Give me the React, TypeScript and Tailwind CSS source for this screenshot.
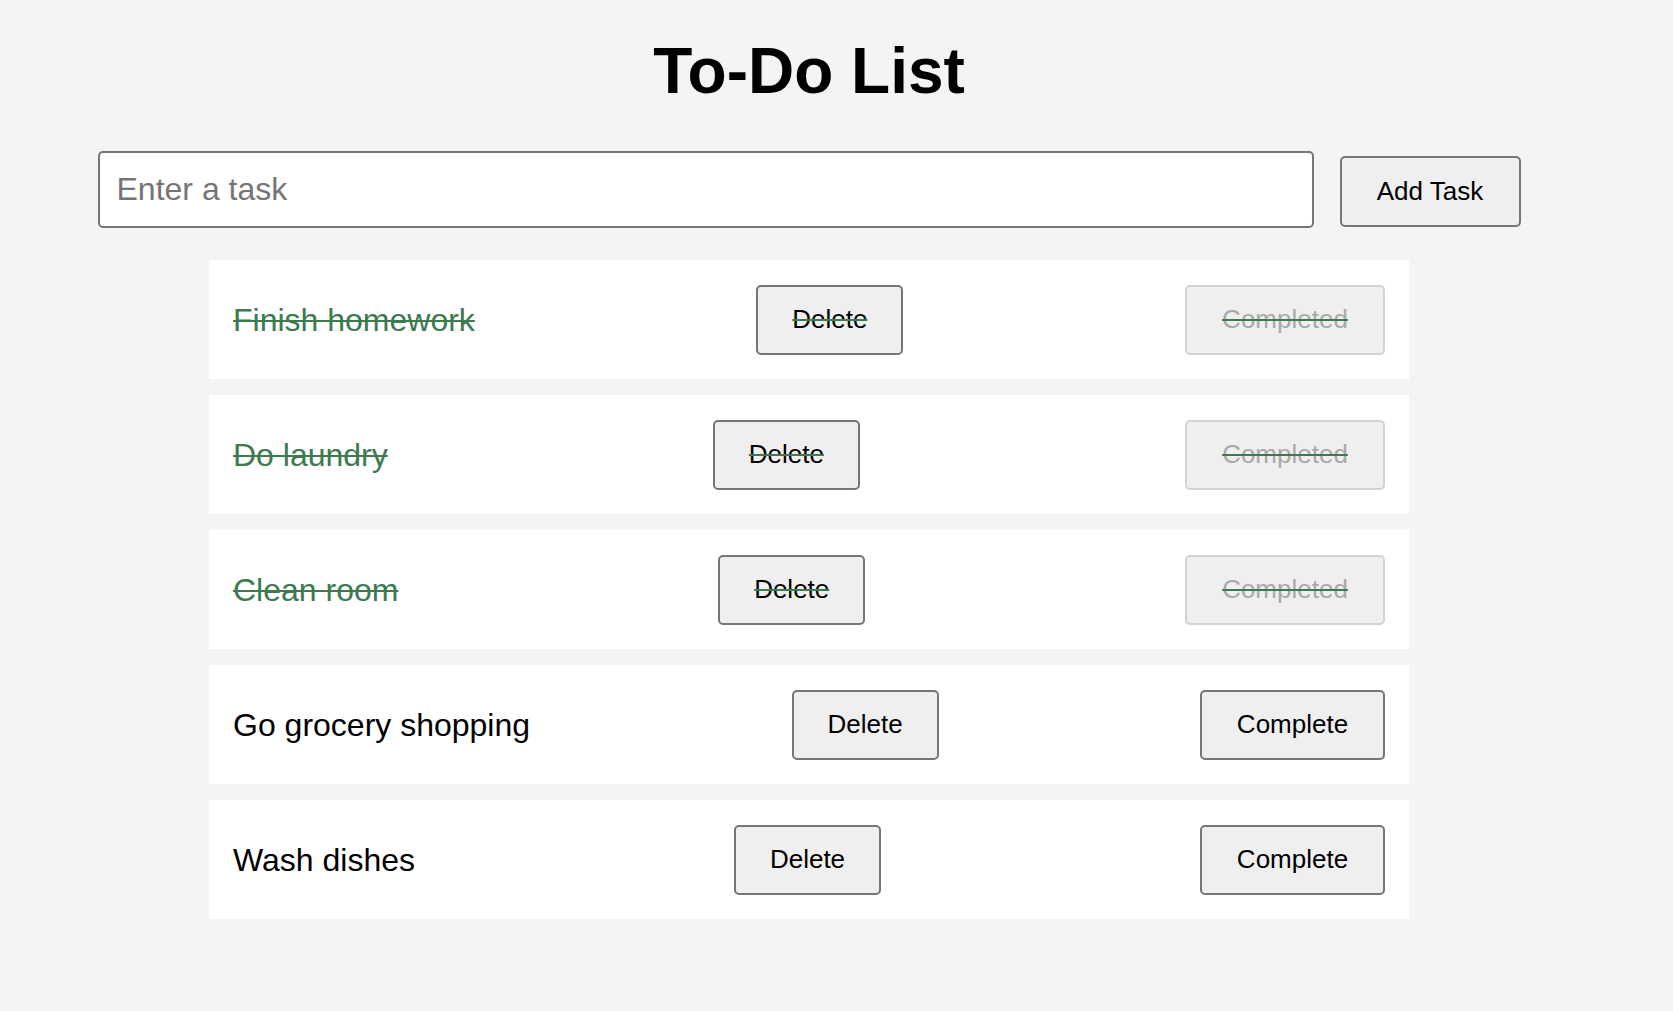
import React from "react";

type Task = { text: string; done: boolean };

const tasks: Task[] = [
  { text: "Finish homework", done: true },
  { text: "Do laundry", done: true },
  { text: "Clean room", done: true },
  { text: "Go grocery shopping", done: false },
  { text: "Wash dishes", done: false },
];

export default function App() {
  return (
    <div className="min-h-screen bg-[#f4f4f4] font-['Liberation_Sans',Arial,sans-serif] text-black">
      <div className="w-[1618px] flex flex-col items-center pt-[35px] pb-10">
        <h1 className="text-[64px] font-bold leading-[72px]">To-Do List</h1>
        <div className="mt-[44px] flex w-[1423px] items-start gap-[26px]">
          <input
            type="text"
            placeholder="Enter a task"
            className="flex-1 h-[77px] border-2 border-[#767676] rounded-[5px] bg-white px-[17px] text-[32px] placeholder:text-[#757575] outline-none"
          />
          <button className="mt-[5px] h-[71px] w-[181px] border-2 border-[#767676] rounded-[5px] bg-[#efefef] text-[26px] text-black">
            Add Task
          </button>
        </div>
        <ul className="mt-[32px] w-[1200px] flex flex-col gap-[16px]">
          {tasks.map((t) => (
            <li
              key={t.text}
              className="h-[119px] bg-white px-[24px] flex items-center justify-between"
            >
              <span
                className={
                  t.done
                    ? "text-[32px] text-[#3d7a50] line-through decoration-2"
                    : "text-[32px] text-black"
                }
              >
                {t.text}
              </span>
              <button className="h-[70px] w-[147px] border-2 border-[#767676] rounded-[5px] bg-[#efefef] text-[26px] text-black">
                <span className={t.done ? "line-through decoration-2 decoration-[#3d7a50]" : ""}>
                  Delete
                </span>
              </button>
              {t.done ? (
                <button
                  disabled
                  className="h-[70px] w-[200px] border-2 border-[#d3d3d3] rounded-[5px] bg-[#efefef] text-[26px] text-[#a9a9a9]"
                >
                  <span className="line-through decoration-2 decoration-[#3d7a50]">Completed</span>
                </button>
              ) : (
                <button className="h-[70px] w-[185px] border-2 border-[#767676] rounded-[5px] bg-[#efefef] text-[26px] text-black">
                  Complete
                </button>
              )}
            </li>
          ))}
        </ul>
      </div>
    </div>
  );
}
